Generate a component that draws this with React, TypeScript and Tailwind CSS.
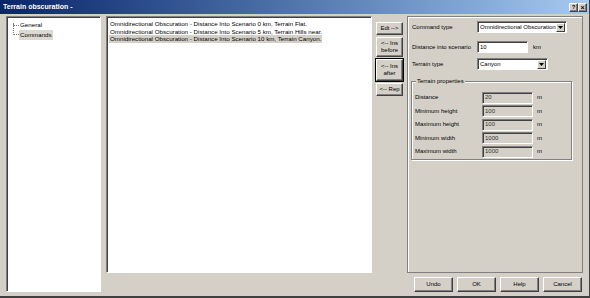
import React from "react";

const font = "font-['Liberation_Sans',Arial,sans-serif]";

const sunken =
  "border border-t-[#808080] border-l-[#808080] border-r-white border-b-white shadow-[inset_1px_1px_0_#404040]";

const Btn = ({ children, className = "" }: { children: React.ReactNode; className?: string }) => (
  <div
    className={`flex items-center justify-center bg-[#d4d0c8] border border-t-white border-l-white border-r-[#404040] border-b-[#404040] shadow-[inset_-1px_-1px_0_#808080] text-[6px] leading-[7px] text-black text-center ${className}`}
  >
    {children}
  </div>
);

const Select = ({ value, width }: { value: string; width: string }) => (
  <div className={`${sunken} bg-white h-[12px] ${width} flex items-center`}>
    <span className="flex-1 pl-[2px] text-[6px] leading-[7px] whitespace-nowrap overflow-hidden">{value}</span>
    <div className="w-[9px] h-[9px] mr-[1px] bg-[#d4d0c8] border border-t-white border-l-white border-r-[#404040] border-b-[#404040] flex items-center justify-center">
      <svg width="5" height="3" viewBox="0 0 5 3">
        <path d="M0 0 H5 L2.5 3 Z" fill="#000" />
      </svg>
    </div>
  </div>
);

const App = () => {
  const lines = [
    "Omnidirectional Obscuration - Distance Into Scenario 0 km, Terrain Flat.",
    "Omnidirectional Obscuration - Distance Into Scenario 5 km, Terrain Hills near.",
    "Omnidirectional Obscuration - Distance Into Scenario 10 km, Terrain Canyon.",
  ];
  const props = [
    ["Distance", "20"],
    ["Minimum height", "100"],
    ["Maximum height", "100"],
    ["Minimum width", "1000"],
    ["Maximum width", "1000"],
  ];

  return (
    <div className={`${font} w-[590px] h-[298px] bg-[#d4d0c8] text-black flex flex-col overflow-hidden border-b-2 border-b-[#404040] border-r border-r-[#404040]`}>
      {/* title bar */}
      <div className="h-[14px] flex items-center bg-gradient-to-r from-[#0a246a] to-[#a6caf0] pl-[3px] pr-[2px]">
        <span className="text-white font-bold text-[7px] leading-[8px]">Terrain obscuration -</span>
        <div className="ml-auto flex">
          <Btn className="w-[9px] h-[9px] font-bold !text-[6px]">?</Btn>
          <Btn className="w-[9px] h-[9px] font-bold !text-[7px]">×</Btn>
        </div>
      </div>

      <div className="flex pl-[6px] pt-[2px]">
        {/* tree */}
        <div className={`${sunken} bg-white w-[95px] h-[276px] relative`}>
          <div className="absolute left-[6px] top-[6px] w-[1px] h-[12px] border-l border-dotted border-[#808080]" />
          <div className="absolute left-[6px] top-[8px] w-[6px] h-[1px] border-t border-dotted border-[#808080]" />
          <div className="absolute left-[6px] top-[17px] w-[6px] h-[1px] border-t border-dotted border-[#808080]" />
          <div className="pl-[12px] pt-[3px] text-[6.2px] leading-[10px]">
            <div className="px-[1px]">General</div>
            <div className="px-[1px] bg-[#dcd9d2] w-fit">Commands</div>
          </div>
        </div>

        <div className="flex flex-col ml-[5px]">
          <div className="flex">
            {/* command list */}
            <div className={`${sunken} bg-white w-[266px] h-[257px] pt-[3px] pl-[2px]`}>
              {lines.map((l, i) => (
                <div
                  key={i}
                  className={`text-[6.2px] leading-[7.5px] whitespace-nowrap w-fit px-[1px] ${i === 2 ? "bg-[#d4d0c8]" : ""}`}
                >
                  {l}
                </div>
              ))}
            </div>

            {/* action buttons */}
            <div className="flex flex-col ml-[4px] w-[27px] pt-[6px] gap-[2px]">
              <Btn className="h-[13px]">Edt --&gt;</Btn>
              <Btn className="h-[20px]">
                &lt;-- Ins
                <br />
                before
              </Btn>
              <Btn className="h-[22px] outline outline-1 outline-black">
                &lt;-- Ins
                <br />
                after
              </Btn>
              <Btn className="h-[13px]">&lt;-- Rep</Btn>
            </div>

            {/* properties panel */}
            <div className="ml-[4px] w-[176px] h-[257px] border border-[#808080] shadow-[inset_1px_1px_0_#fff] pl-[3px] pt-[4px] text-[6px] leading-[7px]">
              <div className="flex items-center">
                <span className="w-[66px] pl-[1px]">Command type</span>
                <Select value="Omnidirectional Obscuration" width="w-[90px]" />
              </div>
              <div className="flex items-center mt-[8px]">
                <span className="w-[66px] pl-[1px]">Distance into scenario</span>
                <div className={`${sunken} bg-white w-[51px] h-[12px] pl-[2px] flex items-center`}>10</div>
                <span className="ml-[5px]">km</span>
              </div>
              <div className="flex items-center mt-[5px]">
                <span className="w-[66px] pl-[1px]">Terrain type</span>
                <Select value="Canyon" width="w-[71px]" />
              </div>

              {/* group box */}
              <div className="relative mt-[11px] w-[161px] h-[79px] border border-[#808080] shadow-[inset_1px_1px_0_#fff,1px_1px_0_#fff] pt-[9px] pl-[3px]">
                <span className="absolute left-[4px] -top-[4px] bg-[#d4d0c8] px-[1px]">Terrain properties</span>
                {props.map(([label, value]) => (
                  <div key={label} className="flex items-center h-[13.5px]">
                    <span className="w-[67px]">{label}</span>
                    <div className={`${sunken} bg-[#d4d0c8] w-[51px] h-[12px] pl-[2px] flex items-center text-[#333]`}>{value}</div>
                    <span className="ml-[4px]">m</span>
                  </div>
                ))}
              </div>
            </div>
          </div>

          {/* bottom buttons */}
          <div className="flex justify-end gap-[4px] mt-[4px] pr-[1px]">
            <Btn className="w-[39px] h-[15px]">Undo</Btn>
            <Btn className="w-[39px] h-[15px]">OK</Btn>
            <Btn className="w-[39px] h-[15px]">Help</Btn>
            <Btn className="w-[39px] h-[15px]">Cancel</Btn>
          </div>
        </div>
      </div>
    </div>
  );
};

export default App;
